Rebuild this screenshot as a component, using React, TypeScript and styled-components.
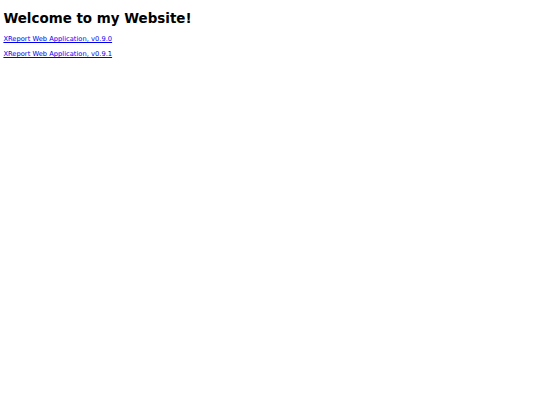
import React from 'react';
import styled, { createGlobalStyle } from 'styled-components';

// the reference is a default browser page shrunk to about 0.42
const GlobalStyle = createGlobalStyle`
  body {
    margin: 3.4px;
    background: #fff;
    font-family: "DejaVu Sans", sans-serif;
  }
`;

const Title = styled.h1`
  margin: 8px 0 9px;
  font-size: 13.44px;
  font-weight: bold;
  color: #000;
`;

const Entry = styled.p`
  margin: 6.72px 0;
  font-size: 6.72px;
`;

const Release = styled.a`
  color: #0000ee;
  text-decoration: underline;
`;

const releases = ['v0.9.0', 'v0.9.1'];

const App: React.FC = () => (
  <>
    <GlobalStyle />
    <Title>Welcome to my Website!</Title>
    {releases.map((v) => (
      <Entry key={v}>
        <Release href='#'>XReport Web Application, {v}</Release>
      </Entry>
    ))}
  </>
);

export default App;
